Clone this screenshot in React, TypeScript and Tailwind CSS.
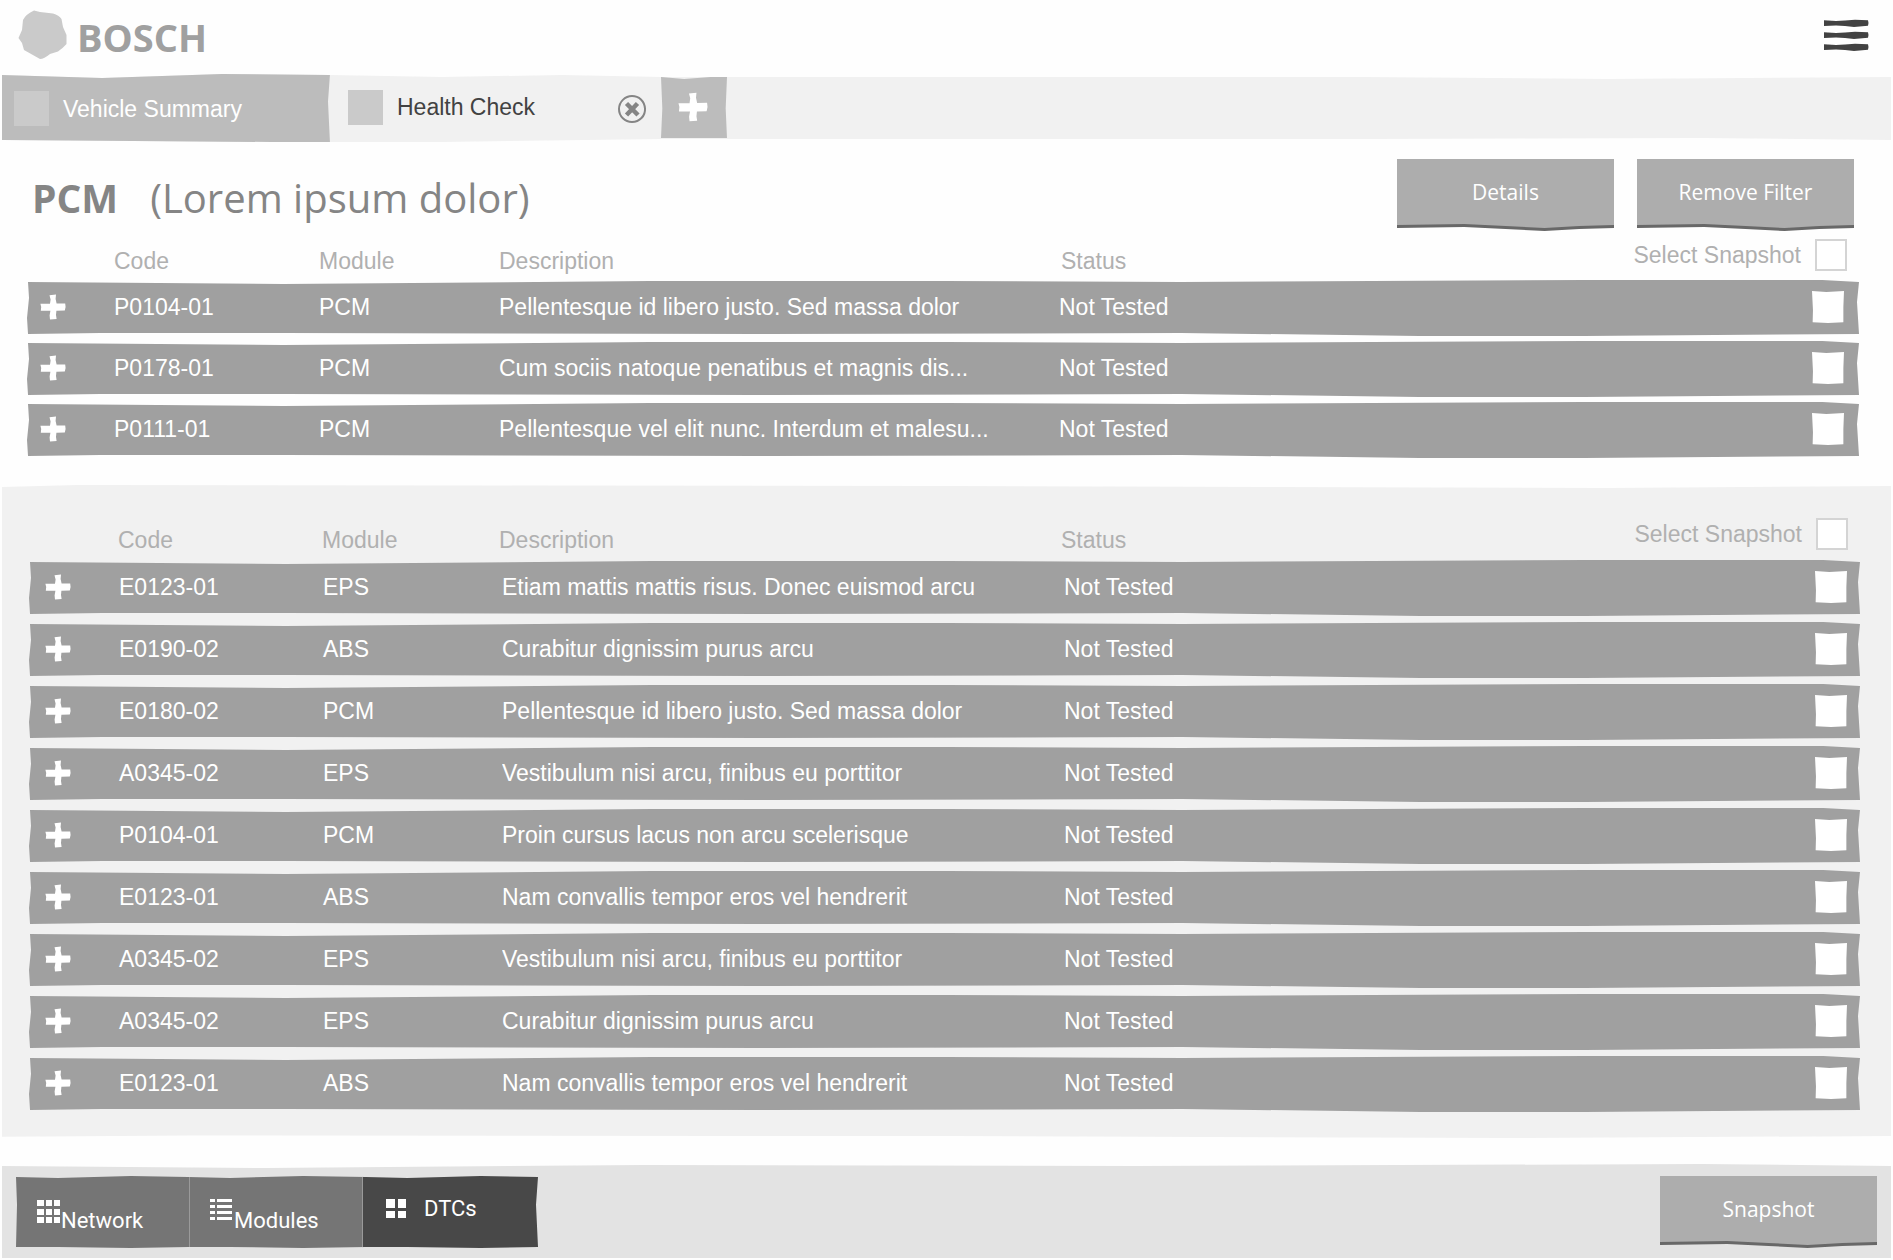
import { useState } from 'react';
import clsx from 'clsx';

type Dtc = {
  code: string;
  module: string;
  description: string;
  status: string;
};

const filteredDtcs: Dtc[] = [
  { code: 'P0104-01', module: 'PCM', description: 'Pellentesque id libero justo. Sed massa dolor', status: 'Not Tested' },
  { code: 'P0178-01', module: 'PCM', description: 'Cum sociis natoque penatibus et magnis dis...', status: 'Not Tested' },
  { code: 'P0111-01', module: 'PCM', description: 'Pellentesque vel elit nunc. Interdum et malesu...', status: 'Not Tested' },
];

const allDtcs: Dtc[] = [
  { code: 'E0123-01', module: 'EPS', description: 'Etiam mattis mattis risus. Donec euismod arcu', status: 'Not Tested' },
  { code: 'E0190-02', module: 'ABS', description: 'Curabitur dignissim purus arcu', status: 'Not Tested' },
  { code: 'E0180-02', module: 'PCM', description: 'Pellentesque id libero justo. Sed massa dolor', status: 'Not Tested' },
  { code: 'A0345-02', module: 'EPS', description: 'Vestibulum nisi arcu, finibus eu porttitor', status: 'Not Tested' },
  { code: 'P0104-01', module: 'PCM', description: 'Proin cursus lacus non arcu scelerisque', status: 'Not Tested' },
  { code: 'E0123-01', module: 'ABS', description: 'Nam convallis tempor eros vel hendrerit', status: 'Not Tested' },
  { code: 'A0345-02', module: 'EPS', description: 'Vestibulum nisi arcu, finibus eu porttitor', status: 'Not Tested' },
  { code: 'A0345-02', module: 'EPS', description: 'Curabitur dignissim purus arcu', status: 'Not Tested' },
  { code: 'E0123-01', module: 'ABS', description: 'Nam convallis tempor eros vel hendrerit', status: 'Not Tested' },
];

function PlusIcon({ className }: { className?: string }) {
  return (
    <svg viewBox="0 0 26 26" className={className} fill="currentColor" aria-hidden="true">
      <path d="M9.5 1.2 16 0.6 15.6 5 16.6 9.6 25.2 9.4 25.6 13 24.8 16.6 16.4 16.8 16 21 16.6 25 10 25.4 9.6 21.4 10.4 16.8 0.8 16.8 1.2 13 0.4 9.8 10 9.8 10.6 5.4Z" />
    </svg>
  );
}

function Checkbox({ label, id, outlined }: { label?: string; id?: string; outlined?: boolean }) {
  return (
    <input
      type="checkbox"
      id={id}
      aria-label={label}
      className={clsx(
        'size-8 shrink-0 appearance-none bg-white checked:bg-gray-600',
        outlined
          ? 'border-2 border-[#d4d4d4]'
          : '[clip-path:polygon(0_0,45%_3%,100%_0,98%_50%,98%_98%,50%_100%,2%_98%,3%_60%)]'
      )}
    />
  );
}

function ActionButton({ children }: { children: string }) {
  return (
    <button className="h-[72px] w-[217px] bg-[#686868] text-[21px] leading-7 text-white [clip-path:polygon(0_0,100%_0,100%_69px,84%_70px,68%_72px,50%_70px,31%_68px,0_69px)]">
      <span className="flex h-full items-center justify-center bg-[#adadad] pb-[7px] font-['Open_Sans',sans-serif] [clip-path:polygon(0_0,100%_0,100%_66px,84%_67px,68%_69px,50%_67px,31%_65px,0_66px)]">
        {children}
      </span>
    </button>
  );
}

type DtcTableProps = {
  id: string;
  rows: Dtc[];
  className: string;
  headClass: string;
  bodyClass: string;
  rowClass: string;
};

function DtcTable({ id, rows, className, headClass, bodyClass, rowClass }: DtcTableProps) {
  return (
    <table className={clsx('block text-[23px] leading-7', className)}>
      <thead className="block">
        <tr className={clsx('grid items-start pr-3 text-[#b0b0b0]', headClass)}>
          <td />
          <th scope="col" className="pt-2 text-left font-normal">Code</th>
          <th scope="col" className="pt-2 text-left font-normal">Module</th>
          <th scope="col" className="pt-2 text-left font-normal">Description</th>
          <th scope="col" className="pt-2 text-left font-normal">Status</th>
          <th scope="col" className="flex items-center gap-3.5 font-normal">
            <label htmlFor={id}>Select Snapshot</label>
            <Checkbox id={id} outlined />
          </th>
        </tr>
      </thead>
      <tbody className={clsx('flex flex-col', bodyClass)}>
        {rows.map((row, i) => (
          <tr
            key={i}
            className={clsx(
              'grid h-[57px] items-center bg-[#a0a0a0] pb-[3px] text-white',
              '[clip-path:polygon(1px_2px,14%_4px,34%_1px,50%_1px,63%_2px,85%_0,98%_0,100%_2px,calc(100%_-_2px)_22px,100%_54px,85%_56px,76%_56px,63%_53px,40%_54px,14%_53px,4%_53px,1px_54px,0_38px,2px_18px)]',
              rowClass
            )}
          >
            <td className="flex">
              <button aria-label="Expand" className="text-white">
                <PlusIcon className="size-[26px]" />
              </button>
            </td>
            <td>{row.code}</td>
            <td>{row.module}</td>
            <td className="truncate">{row.description}</td>
            <td>{row.status}</td>
            <td className="flex">
              <Checkbox label={`Select snapshot ${row.code}`} />
            </td>
          </tr>
        ))}
      </tbody>
    </table>
  );
}

function NetworkIcon() {
  return (
    <svg viewBox="0 0 24 24" className="size-6" fill="white" aria-hidden="true">
      {[0, 9, 17].map((y) => (
        <g key={y}>
          <rect x="0" y={y} width="7" height="6" />
          <rect x="9" y={y} width="6" height="6" />
          <rect x="17" y={y} width="6" height="6" />
        </g>
      ))}
    </svg>
  );
}

function ModulesIcon() {
  return (
    <svg viewBox="0 0 24 24" className="size-6" fill="white" aria-hidden="true">
      {[0, 6, 12, 18].map((y) => (
        <g key={y}>
          <rect x="0" y={y} width="5" height="3" />
          <rect x="7" y={y} width="15" height="3" />
        </g>
      ))}
    </svg>
  );
}

function DtcIcon() {
  return (
    <svg viewBox="0 0 21 21" className="size-[21px]" fill="white" aria-hidden="true">
      <path d="M0 0h9v9H0zM12 0h8v9h-8zM0 12h9v7H0zM12 12h8v7h-8z" />
    </svg>
  );
}

export default function App() {
  const [view, setView] = useState('DTCs');

  return (
    <div className="min-h-screen bg-[#fefefe] px-[2px] font-['Liberation_Sans',Arial,sans-serif]">
      {/* Header */}
      <header className="flex h-[74px] items-start justify-between pl-4 pr-[22px]">
        <div className="flex items-start gap-[9px] pt-2.5">
          <svg viewBox="0 0 50 50" className="size-[50px]" fill="#cacaca" aria-hidden="true">
            <path d="M5 10 Q8 4 16 0.500 L22 2 35 3.500 Q41 5 43.500 9 L45 17 48.500 25 48.500 34 Q44 39 40 41.500 L32 44 Q26 49 22 49 L14 44.500 6 40 4 33 0.500 28 4 20Z" />
          </svg>
          <span className="font-['Open_Sans',sans-serif] text-[38px] font-bold leading-[54px] text-[#a0a0a0]">BOSCH</span>
        </div>
        <button aria-label="Menu" className="pt-[19px]">
          <svg viewBox="0 0 46 34" className="h-[34px] w-[46px]" fill="#424242" aria-hidden="true">
            {[0, 12, 24].map((y) => (
              <path
                key={y}
                transform={`translate(0 ${y})`}
                d="M1 1.200 13 2 22 1.500 32 0.800 45 1.200 45.500 4 45 6.800 31 8 22 7 13 6.400 1 7Z"
              />
            ))}
          </svg>
        </button>
      </header>

      {/* Tabs */}
      <nav className="flex h-[69px] bg-[#f1f1f1] text-[23px] leading-7 [clip-path:polygon(0_1px,100px_4px,220px_0,328px_1px,440px_3px,560px_1px,660px_3px,72%_3px,85%_5px,100%_3px,100%_66px,90%_64px,72%_65px,660px_65px,440px_68px,328px_68px,270px_68px,130px_67px,0_66px)]">
        <button className="flex w-[328px] items-center gap-3.5 bg-[#bcbcbc] pl-3 text-white [clip-path:polygon(0_0,100%_0,calc(100%_-_2px)_40%,100%_100%,0_100%)]">
          <span className="size-[35px] bg-[#cacaca]" />
          Vehicle Summary
        </button>
        <div className="flex w-[331px] items-center pb-[3px] pl-[18px] pr-3.5 text-[#424242]">
          <button className="flex flex-1 items-center gap-3.5 text-left">
            <span className="size-[35px] bg-[#cacaca]" />
            Health Check
          </button>
          <button aria-label="Close tab" className="pt-1">
            <svg viewBox="0 0 30 30" className="size-[30px]" fill="none" stroke="#858585" aria-hidden="true">
              <path strokeWidth="2" d="M15 2C22 2 27.500 7 28 14.500 28.500 22 22.500 28 15 28 8 28 2 22.500 2 15 2 8 8 2 15 2Z" />
              <path strokeWidth="4.500" d="M9.500 9.500 21 21M20.500 9.500 9.500 21" />
            </svg>
          </button>
        </div>
        <button
          aria-label="Add tab"
          className="flex w-[66px] items-center justify-center bg-[#bcbcbc] pb-1 pr-[2px] text-white [clip-path:polygon(0_3px,35%_5px,75%_3px,100%_3px,98%_50%,100%_64px,0_64px,2%_50%)]"
        >
          <PlusIcon className="size-[30px]" />
        </button>
      </nav>

      <main>
        {/* Selected module */}
        <section className="pb-[26px]">
          <div className="flex h-24 items-start justify-between pl-[30px] pr-[37px] pt-4">
            <h1 className="flex gap-8 pt-3 font-['Open_Sans',sans-serif] text-[40px] leading-[54px] text-[#858585]">
              <span className="text-[39px] font-bold">PCM</span>
              <span>(Lorem ipsum dolor)</span>
            </h1>
            <div className="flex gap-[23px]">
              <ActionButton>Details</ActionButton>
              <ActionButton>Remove Filter</ActionButton>
            </div>
          </div>
          <DtcTable
            id="filtered-all"
            rows={filteredDtcs}
            className="ml-[25px] mr-8"
            headClass="h-[41px] grid-cols-[87px_205px_180px_562px_1fr_auto]"
            bodyClass="gap-1"
            rowClass="grid-cols-[74px_205px_180px_560px_1fr_auto] pl-[13px] pr-[15px]"
          />
        </section>

        {/* All trouble codes */}
        <section className="bg-[#f1f1f1] pb-[25px] pt-[33px] [clip-path:polygon(0_2px,4%_0,50%_1px,85%_3px,100%_1px,100%_99.700%,80%_100%,50%_99.700%,10%_99.600%,0_99.800%)]">
          <DtcTable
            id="all-all"
            rows={allDtcs}
            className="ml-[27px] mr-[31px]"
            headClass="h-[42px] grid-cols-[89px_204px_177px_562px_1fr_auto]"
            bodyClass="gap-[5px]"
            rowClass="grid-cols-[74px_204px_179px_562px_1fr_auto] pl-4 pr-[13px]"
          />
        </section>
      </main>

      {/* Bottom bar */}
      <footer className="mt-[26px] flex h-[94px] items-start justify-between bg-[#e3e3e3] px-3.5 pt-3 [clip-path:polygon(0_2px,14%_4px,34%_1px,60%_2px,90%_0,100%_2px,100%_94px,0_94px)]">
        <div className="flex h-[72px] font-[Roboto,sans-serif] text-[22px] leading-7 text-white [clip-path:polygon(0_1px,8%_2px,22%_0,33%_1px,41%_2px,55%_0,67%_1px,75%_2px,89%_0,100%_1px,calc(100%_-_2px)_40%,100%_71px,89%_72px,75%_71px,67%_71px,55%_72px,41%_71px,33%_71px,22%_72px,8%_71px,0_71px,1px_40%)]">
          <button
            onClick={() => setView('Network')}
            className={clsx('flex w-[174px] items-start border-r border-[#9a9a9a] pl-[21px] pt-6', view === 'Network' ? 'bg-[#484848]' : 'bg-[#757575]')}
          >
            <NetworkIcon />
            <span className="pt-[7px]">Network</span>
          </button>
          <button
            onClick={() => setView('Modules')}
            className={clsx('flex w-[173px] items-start border-r border-[#9a9a9a] pl-5 pt-[23px]', view === 'Modules' ? 'bg-[#484848]' : 'bg-[#757575]')}
          >
            <ModulesIcon />
            <span className="pt-2">Modules</span>
          </button>
          <button
            onClick={() => setView('DTCs')}
            className={clsx('flex w-[175px] items-start gap-[17px] pl-[23px] pt-[19px]', view === 'DTCs' ? 'bg-[#484848]' : 'bg-[#757575]')}
          >
            <span className="pt-1">
              <DtcIcon />
            </span>
            <span>DTCs</span>
          </button>
        </div>
        <ActionButton>Snapshot</ActionButton>
      </footer>
    </div>
  );
}
